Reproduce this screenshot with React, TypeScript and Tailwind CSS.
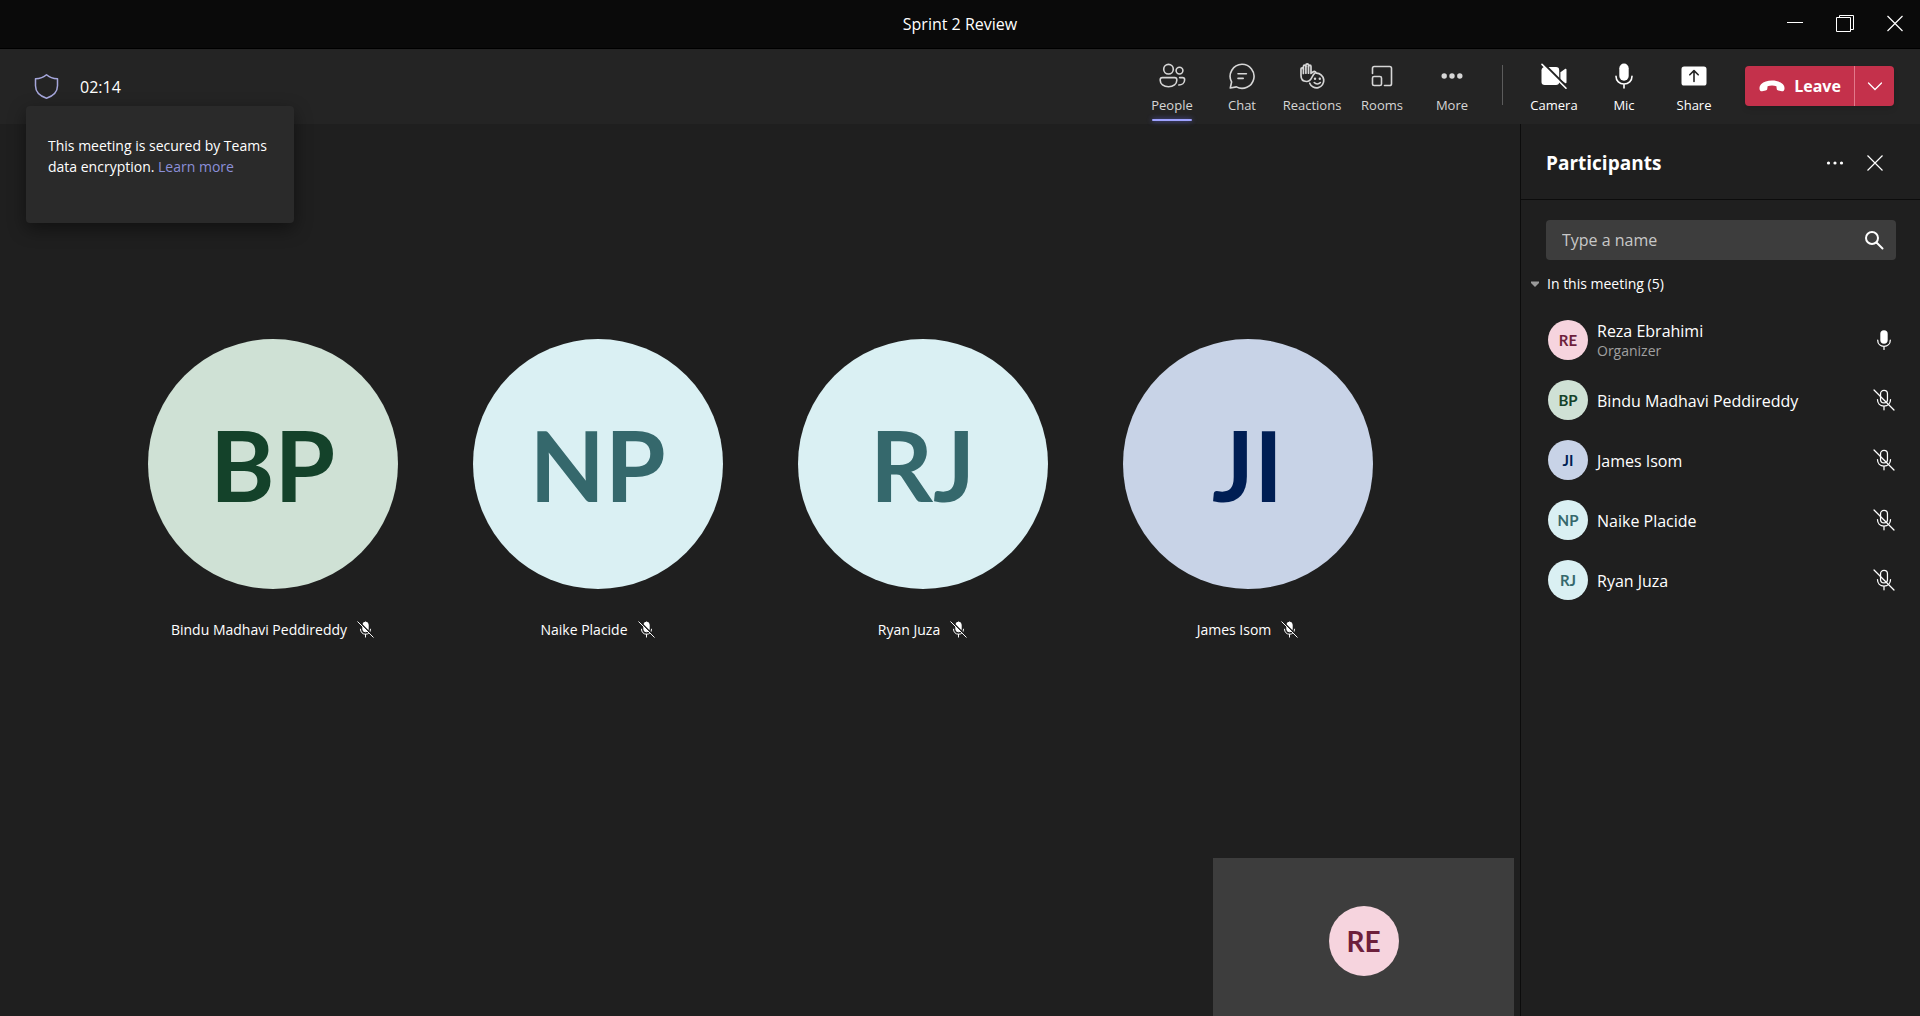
import type { ReactNode } from "react";

type Person = { name: string; initials: string; bg: string; fg: string; role?: string; muted: boolean };

const reza: Person = { name: "Reza Ebrahimi", initials: "RE", bg: "bg-[#f6d4de]", fg: "text-[#6d1f3c]", role: "Organizer", muted: false };
const bindu: Person = { name: "Bindu Madhavi Peddireddy", initials: "BP", bg: "bg-[#cfe1d5]", fg: "text-[#14422a]", muted: true };
const james: Person = { name: "James Isom", initials: "JI", bg: "bg-[#c8d3e7]", fg: "text-[#001e54]", muted: true };
const naike: Person = { name: "Naike Placide", initials: "NP", bg: "bg-[#daf0f3]", fg: "text-[#35686c]", muted: true };
const ryan: Person = { name: "Ryan Juza", initials: "RJ", bg: "bg-[#daf0f3]", fg: "text-[#35686c]", muted: true };

const stage = [bindu, naike, ryan, james];
const roster = [reza, bindu, james, naike, ryan];

function Icon({ className = "size-7", children }: { className?: string; children: ReactNode }) {
  return (
    <svg viewBox="0 0 28 28" className={className} fill="none" stroke="currentColor" strokeWidth="1.6" strokeLinecap="round" strokeLinejoin="round" aria-hidden="true">
      {children}
    </svg>
  );
}

const PeopleIcon = () => (
  <Icon>
    <circle cx="10.5" cy="7.2" r="4.8" />
    <circle cx="21.5" cy="8.6" r="3.4" />
    <path d="M4.3 15.6h12.4c1.2 0 2.1.9 2.1 2.1v.5c0 3.8-3.4 6.6-8.3 6.6s-8.300-2.800-8.300-6.600v-.5c0-1.200.9-2.100 2.100-2.100z" />
    <path d="M21.600 15.600h3c1.200 0 2 .9 2 2v.4c0 3.200-2.800 5-5.800 5" />
  </Icon>
);

const ChatIcon = () => (
  <Icon>
    <path d="M14 2.3a12 12 0 1 1-5.6 22.6L2.3 26l1.3-6A12 12 0 0 1 14 2.3z" />
    <path d="M10 11.7h8.4M10 16.4h5.2" />
  </Icon>
);

const ReactionsIcon = () => (
  <Icon>
    <path d="M3 13.600V7c0-1.600 2.400-1.600 2.400 0V4.400c0-1.700 2.500-1.700 2.500 0V3.200c0-1.700 2.600-1.700 2.600 0v1.200c0-1.700 2.500-1.700 2.500 0v7l2.300-1.600c1-.7 2.200-.2 2.500.6-2.200 1.500-3.100 3-4 5.100-1.200 2.700-2.800 4-5.300 4C5.200 19.500 3 17.600 3 13.600z" strokeWidth="1.700" />
    <path d="M5.400 7v4.500M7.900 4.400v6.800M10.500 4.400v6.800" strokeWidth="1.700" />
    <path d="M18.500 11.200a7.300 7.300 0 1 1-6.800 10" strokeWidth="1.700" />
    <circle cx="17" cy="16.800" r="1.200" fill="currentColor" stroke="none" />
    <circle cx="21.800" cy="16.800" r="1.200" fill="currentColor" stroke="none" />
    <path d="M16.200 20.600c1.600 1.900 4.600 1.900 6.200 0" />
  </Icon>
);

const RoomsIcon = () => (
  <Icon>
    <path d="M4.500 11.500V6.300c0-1 .8-1.800 1.800-1.800h15.400c1 0 1.800.8 1.800 1.800v15.400c0 1-.8 1.800-1.800 1.800h-5.200" />
    <rect x="4.500" y="14.500" width="9" height="9" rx="1.600" />
  </Icon>
);

const MoreIcon = () => (
  <Icon>
    <g fill="currentColor" stroke="none">
      <circle cx="6.200" cy="14" r="2.700" />
      <circle cx="14" cy="14" r="2.700" />
      <circle cx="21.800" cy="14" r="2.700" />
    </g>
  </Icon>
);

const CameraOffIcon = () => (
  <Icon>
    <g fill="currentColor" stroke="none">
      <path d="M4.500 5H16a3.200 3.200 0 0 1 3.200 3.200v11.600A3.200 3.200 0 0 1 16 23H4.700a3.200 3.200 0 0 1-3.200-3.200V8.200c0-1.600 1.300-3.200 3-3.200z" />
      <path d="M20.400 10.300 25 6.900c.7-.5 1.500 0 1.500.8v12.600c0 .8-.8 1.300-1.500.8l-4.600-3.400z" />
    </g>
    <path d="M3.600 1.600 27.500 25.500" stroke="#242424" strokeWidth="2.200" />
    <path d="M2 2.400 26 26.200" />
  </Icon>
);

const MicIcon = ({ className }: { className?: string }) => (
  <Icon className={className}>
    <rect x="9.300" y="1.500" width="9.400" height="17.200" rx="4.700" fill="currentColor" stroke="none" />
    <path d="M6 14.300c0 4.600 3.400 7.700 8 7.700s8-3.100 8-7.700M14 22v4" />
  </Icon>
);

const MicOffIcon = ({ filled, className }: { filled?: boolean; className?: string }) => (
  <Icon className={className}>
    <rect x="9.600" y="1.800" width="8.800" height="16" rx="4.400" fill={filled ? "currentColor" : "none"} />
    <path d="M5.700 13.500c0 4.900 3.500 8.300 8.300 8.300s8.300-3.400 8.300-8.300M14 21.800v4.700" />
    {filled && <path d="M3 .8 27.500 25.400" stroke="#1f1f1f" strokeWidth="2.400" />}
    <path d="M1.300 1.300 26.700 26.700" />
  </Icon>
);

const ShareIcon = () => (
  <Icon>
    <rect x="1.500" y="4.500" width="25" height="19" rx="2.600" fill="currentColor" stroke="none" />
    <path d="M14 19.500V9M9.800 12.800 14 8.600l4.200 4.200" stroke="#242424" />
  </Icon>
);

const HangUpIcon = () => (
  <Icon>
    <path
      stroke="none"
      fill="currentColor"
      d="M14 8.600c4.600 0 8.400 1.200 10.700 3.400 1.700 1.700 2.200 3.900 1.500 6-.3 1-1.300 1.500-2.300 1.300l-3.500-.7c-.9-.2-1.600-.9-1.700-1.800l-.3-2.500c-1.400-.5-2.900-.7-4.400-.7s-3 .2-4.400.7l-.3 2.500c-.1.900-.8 1.600-1.700 1.800l-3.500.7c-1 .2-2-.3-2.300-1.300-.7-2.100-.2-4.300 1.500-6C5.600 9.800 9.400 8.600 14 8.600z"
    />
  </Icon>
);

function ToolButton({ label, active, bright, children }: { label: string; active?: boolean; bright?: boolean; children: ReactNode }) {
  return (
    <button type="button" className={`flex w-[70px] flex-col items-center pt-[13px] ${bright ? "text-white" : "text-[#d6d6d6]"}`}>
      {children}
      <span className="mt-[5px] text-[13px] leading-5">{label}</span>
      {active && <span className="mt-1 h-0.5 w-10 rounded-full bg-[#9ea2ff] shadow-[0_0_5px_#5b5fc7]" />}
    </button>
  );
}

function Titlebar() {
  return (
    <div className="grid h-[49px] shrink-0 grid-cols-[1fr_auto_1fr] items-center border-b border-black bg-[#0a0a0a]">
      <h1 className="col-start-2 text-base leading-6">Sprint 2 Review</h1>
      <div className="flex justify-end">
        <button type="button" aria-label="Minimize" className="flex h-11 w-[50px] items-center justify-center">
          <svg viewBox="0 0 18 18" className="size-[18px]" stroke="currentColor" aria-hidden="true"><path d="M1 7.500h16" /></svg>
        </button>
        <button type="button" aria-label="Restore" className="flex h-11 w-[50px] items-center justify-center">
          <svg viewBox="0 0 18 18" className="size-[18px]" fill="none" stroke="currentColor" aria-hidden="true"><path d="M.5 2.500h14v14H.5zM3.500 2V.5h14v14H15" /></svg>
        </button>
        <button type="button" aria-label="Close" className="flex h-11 w-[50px] items-center justify-center">
          <svg viewBox="0 0 18 18" className="size-[18px]" stroke="currentColor" strokeWidth="1.200" aria-hidden="true"><path d="m1.500 1 15 15M16.500 1l-15 15" /></svg>
        </button>
      </div>
    </div>
  );
}

function Header() {
  return (
    <header className="relative z-10 flex h-[75px] shrink-0 items-start bg-[#242424]">
      <div className="flex flex-1 items-center gap-5 pt-6 pl-8">
        <svg viewBox="0 0 28 28" className="size-7" fill="none" stroke="#a6a7dc" strokeWidth="1.500" strokeLinejoin="round" aria-hidden="true">
          <path d="M14.500 1.700c3 2.700 6.600 3.900 11 4.100v7c0 6-3.700 10-11 12.500C7.200 22.800 3.500 18.800 3.500 12.800v-7c4.400-.2 8-1.400 11-4.100z" />
        </svg>
        <time className="text-base leading-6">02:14</time>
      </div>
      <nav aria-label="Meeting controls" className="flex">
        <ToolButton label="People" active><PeopleIcon /></ToolButton>
        <ToolButton label="Chat"><ChatIcon /></ToolButton>
        <ToolButton label="Reactions"><ReactionsIcon /></ToolButton>
        <ToolButton label="Rooms"><RoomsIcon /></ToolButton>
        <ToolButton label="More"><MoreIcon /></ToolButton>
        <span className="mt-4 mr-4 ml-[15px] h-10 w-px bg-[#5c5c5c]" />
        <ToolButton label="Camera" bright><CameraOffIcon /></ToolButton>
        <ToolButton label="Mic" bright><MicIcon /></ToolButton>
        <ToolButton label="Share" bright><ShareIcon /></ToolButton>
      </nav>
      <div className="mt-[17px] mr-[26px] ml-4 flex h-10 overflow-hidden rounded bg-[#c4314b] shadow-md">
        <button type="button" className="flex w-[110px] items-center justify-center gap-2 border-r border-[#e2788a] font-bold">
          <HangUpIcon />
          <span className="text-base leading-6">Leave</span>
        </button>
        <button type="button" aria-label="Leave options" className="flex w-[39px] items-center justify-center">
          <svg viewBox="0 0 16 16" className="size-4" fill="none" stroke="currentColor" strokeWidth="1.300" strokeLinecap="round" aria-hidden="true"><path d="m1.500 5 6.500 6.500L14.500 5" /></svg>
        </button>
      </div>
      <div role="tooltip" className="absolute top-[57px] left-[26px] h-[117px] w-[268px] rounded bg-[#2a2a2a] px-[22px] pt-[29px] text-sm leading-[21px] whitespace-nowrap shadow-[0_6px_18px_rgba(0,0,0,0.45)]">
        This meeting is secured by Teams
        <br />
        data encryption. <a href="#encryption" className="text-[#8b8fd9]">Learn more</a>
      </div>
    </header>
  );
}

function Avatar({ person, className }: { person: Person; className: string }) {
  return (
    <div className={`flex shrink-0 items-center justify-center rounded-full font-['Lato','Open_Sans',sans-serif] leading-none ${person.bg} ${person.fg} ${className}`}>
      {person.initials}
    </div>
  );
}

function StageTile({ person }: { person: Person }) {
  return (
    <figure className="flex flex-col items-center">
      <Avatar person={person} className="size-[250px] text-[98px] font-bold" />
      <figcaption className="mt-[30px] flex items-center gap-2.5 text-sm leading-[21px] whitespace-nowrap">
        {person.name}
        <MicOffIcon filled className="size-[17px]" />
      </figcaption>
    </figure>
  );
}

function Participants() {
  return (
    <aside className="w-[400px] shrink-0 border-l border-[#0c0c0c]">
      <div className="flex h-[76px] items-center border-b border-[#0c0c0c] pt-0.5 pr-[25px] pl-[25px]">
        <h2 className="flex-1 text-[19px] leading-7 font-bold">Participants</h2>
        <button type="button" aria-label="More options" className="flex size-10 items-center justify-center">
          <svg viewBox="0 0 18 18" className="size-[18px]" fill="currentColor" aria-hidden="true"><circle cx="2.500" cy="9" r="1.600" /><circle cx="9" cy="9" r="1.600" /><circle cx="15.500" cy="9" r="1.600" /></svg>
        </button>
        <button type="button" aria-label="Close panel" className="flex size-10 items-center justify-center">
          <svg viewBox="0 0 18 18" className="size-[18px]" stroke="currentColor" strokeWidth="1.200" aria-hidden="true"><path d="m1.500 1.500 15 15M16.500 1.500l-15 15" /></svg>
        </button>
      </div>
      <label className="mt-5 mr-6 ml-[25px] flex h-10 items-center rounded bg-[#3d3d3d] pr-3 pl-4">
        <input type="text" aria-label="Type a name" placeholder="Type a name" className="min-w-0 flex-1 bg-transparent text-base outline-none placeholder:text-[#c8c8c8]" />
        <svg viewBox="0 0 20 20" className="size-5" fill="none" stroke="currentColor" strokeWidth="2" strokeLinecap="round" aria-hidden="true"><circle cx="8" cy="8" r="6" /><path d="m12.500 12.500 6 6" /></svg>
      </label>
      <button type="button" aria-expanded="true" className="mt-3 ml-2.5 flex items-center gap-2 text-sm leading-6">
        <svg viewBox="0 0 8 8" className="size-2" fill="#9a9a9a" aria-hidden="true"><path d="M0 1.500h8v1.500L4 7 0 3z" /></svg>
        In this meeting (5)
      </button>
      <ul className="mt-[14px]">
        {roster.map((p) => (
          <li key={p.name} className="flex h-[60px] items-center pr-[25px] pl-[27px]">
            <Avatar person={p} className="mr-[9px] size-10 text-[15px] font-bold" />
            <div className="flex-1 pt-0.5">
              <div className="text-base leading-5">{p.name}</div>
              {p.role && <div className="text-sm leading-5 text-[#a0a0a0]">{p.role}</div>}
            </div>
            {p.muted ? <MicOffIcon className="size-[22px]" /> : <MicIcon className="size-[22px]" />}
          </li>
        ))}
      </ul>
    </aside>
  );
}

export default function App() {
  return (
    <div className="flex h-screen flex-col overflow-hidden bg-[#1f1f1f] font-['Open_Sans','Noto_Sans',sans-serif] text-white">
      <Titlebar />
      <Header />
      <div className="flex min-h-0 flex-1">
        <main className="relative flex-1 pt-[215px]">
          <div className="flex flex-wrap justify-center gap-[75px]">
            {stage.map((p) => (
              <StageTile key={p.name} person={p} />
            ))}
          </div>
          <div className="absolute right-1.5 bottom-0 flex h-[158px] w-[301px] justify-center bg-[#3d3d3d] pt-12">
            <Avatar person={reza} className="size-[70px] text-[28px] font-bold" />
          </div>
        </main>
        <Participants />
      </div>
    </div>
  );
}
